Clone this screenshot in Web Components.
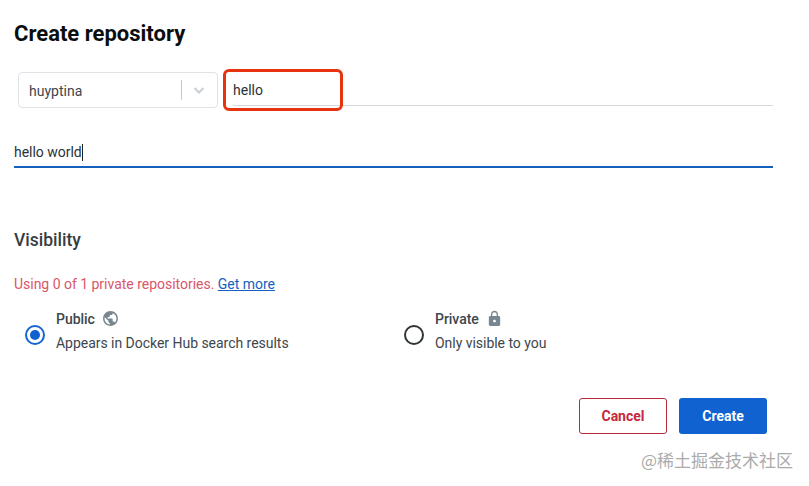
<!DOCTYPE html>
<html><head><meta charset="utf-8"><style>
html,body{margin:0;padding:0;background:#fff}
body{width:809px;height:486px;overflow:hidden;font-family:Roboto,sans-serif;position:relative}
</style></head><body>
<repo-form></repo-form>
<script>
const GLOBE='<svg width="17" height="17" viewBox="0 0 24 24"><path fill="#78868f" d="M12 1.500C6.200 1.500 1.500 6.200 1.500 12S6.200 22.500 12 22.500 22.500 17.800 22.500 12 17.800 1.500 12 1.500zM10.900 20.300C6.800 19.800 3.600 16.300 3.600 12c0-.7.100-1.300.200-1.900L9 15.300v1.100c0 1.200.9 2.100 2 2.100v1.800zm7.200-2.700c-.3-.9-1.100-1.500-2-1.500H15V13c0-.6-.5-1-1-1H8v-2h2c.6 0 1-.5 1-1V7h2c1.200 0 2.100-.9 2.100-2.100v-.4c3.100 1.200 5.300 4.200 5.300 7.700 0 2.100-.9 4.100-2.300 5.400z"/></svg>';
const LOCK='<svg width="17" height="17" viewBox="0 0 24 24"><path fill="#78868f" d="M18 8.500h-1V6.200C17 3.500 14.800 1.200 12 1.200S7 3.500 7 6.200v2.300H6c-1.100 0-2 .9-2 2v10c0 1.100.9 2 2 2h12c1.100 0 2-.9 2-2v-10c0-1.100-.9-2-2-2zm-6 9.200c-1.100 0-2-.9-2-2s.9-2 2-2 2 .9 2 2-.9 2-2 2zm3.100-9.200H8.900V6.200c0-1.700 1.400-3.100 3.100-3.100s3.100 1.400 3.100 3.100v2.300z"/></svg>';

customElements.define('org-select',class extends HTMLElement{constructor(){super();this.attachShadow({mode:'open'}).innerHTML=`<style>
:host{display:flex;align-items:center;box-sizing:border-box;width:200px;height:36px;border:1px solid #dfe3e8;border-radius:4px;padding:2px 0 0 10px;color:#3d464d;font-size:14px;flex:none}
span{flex:1}
i{width:1px;height:20px;background:#c4c9cd;display:block;margin-top:-2px}
svg{margin:-2px 11px 0 10px;display:block}
</style><span><slot></slot></span><i></i><svg width="14" height="14" viewBox="0 0 14 14"><path d="M2.500 5l4.500 4.500L11.500 5" fill="none" stroke="#c9ced2" stroke-width="2"/></svg>`}});

customElements.define('name-field',class extends HTMLElement{constructor(){super();this.attachShadow({mode:'open'}).innerHTML=`<style>
:host{display:flex;flex:1;height:34px;align-self:flex-start;box-sizing:border-box;border-bottom:1px solid #d4d8db;margin-left:15px;color:#2b3237;font-size:14px;align-items:center;padding-top:3px;position:relative}
b{position:absolute;left:-10px;top:-3px;width:120px;height:42px;box-sizing:border-box;border:3px solid #e8330f;border-radius:6px}
</style><slot></slot><b></b>`}});

customElements.define('desc-field',class extends HTMLElement{constructor(){super();this.attachShadow({mode:'open'}).innerHTML=`<style>
:host{display:flex;align-items:center;box-sizing:border-box;height:30px;border-bottom:2px solid #1560bd;color:#2b3237;font-size:14px;letter-spacing:-.03px}
i{display:block;width:1px;height:17px;background:#222}
</style><slot></slot><i></i>`}});

customElements.define('radio-option',class extends HTMLElement{constructor(){super();const on=this.hasAttribute('checked');this.attachShadow({mode:'open'}).innerHTML=`<style>
:host{display:flex;align-items:center;color:#3d464d;font-size:14px;letter-spacing:-.03px}
.r{flex:none;box-sizing:border-box;width:20px;height:20px;border-radius:50%;border:2px solid ${on?'#1565d0':'#2f3437'};display:flex;align-items:center;justify-content:center;margin:8px 11px 0 0}
.r i{display:${on?'block':'none'};width:10px;height:10px;border-radius:50%;background:#0f62d0}
.t{display:flex;flex-direction:column;gap:4px}
.h{display:flex;align-items:center;gap:7px;font-weight:500;line-height:20px}
.d{line-height:20px}
.h span{display:flex;margin-top:-2px}
</style><div class="r"><i></i></div><div class="t"><div class="h"><slot name="label"></slot><span>${on?GLOBE:LOCK}</span></div><div class="d"><slot name="desc"></slot></div></div>`}});

customElements.define('ui-button',class extends HTMLElement{constructor(){super();const p=this.getAttribute('kind')==='primary';this.attachShadow({mode:'open'}).innerHTML=`<style>
:host{display:flex;align-items:center;justify-content:center;box-sizing:border-box;width:88px;height:36px;border-radius:3px;font-size:14px;font-weight:700;${p?'background:#0f62d0;color:#fff':'border:1px solid #b62a3c;color:#c4283c;background:#fff'}}
</style><slot></slot>`}});

customElements.define('repo-form',class extends HTMLElement{constructor(){super();this.attachShadow({mode:'open'}).innerHTML=`<style>
:host{display:block;box-sizing:border-box;width:809px;height:486px;padding:20px 36px 0 14px;position:relative}
h1{margin:0;font-size:22px;line-height:27px;font-weight:700;color:#0b0e10}
.row{display:flex;margin:25px 0 0 4px}
desc-field{margin-top:30px}
h2{margin:61px 0 0;font-size:17.500px;line-height:22px;font-weight:500;color:#363d42}
.note{margin-top:23px;font-size:14px;line-height:20px;color:#d9566b;letter-spacing:-.02px}
.note a{color:#1560bd;text-decoration:underline}
.opts{display:flex;margin:15px 0 0 11px}
.opts radio-option:first-child{width:379px}
.btns{display:flex;justify-content:flex-end;gap:12px;margin:45px -30px 0 0;padding-right:36px}
.wm{position:absolute;left:641px;top:450px;font-family:"Noto Sans CJK SC",sans-serif;font-size:17px;line-height:20px;color:#ababab;white-space:nowrap}
</style>
<h1>Create repository</h1>
<div class="row"><org-select>huyptina</org-select><name-field>hello</name-field></div>
<desc-field>hello world</desc-field>
<h2>Visibility</h2>
<div class="note">Using 0 of 1 private repositories. <a>Get more</a></div>
<div class="opts">
<radio-option checked><span slot="label">Public</span><span slot="desc">Appears in Docker Hub search results</span></radio-option>
<radio-option><span slot="label">Private</span><span slot="desc">Only visible to you</span></radio-option>
</div>
<div class="btns"><ui-button>Cancel</ui-button><ui-button kind="primary">Create</ui-button></div>
<div class="wm">@稀土掘金技术社区</div>`}});
</script></body></html>
